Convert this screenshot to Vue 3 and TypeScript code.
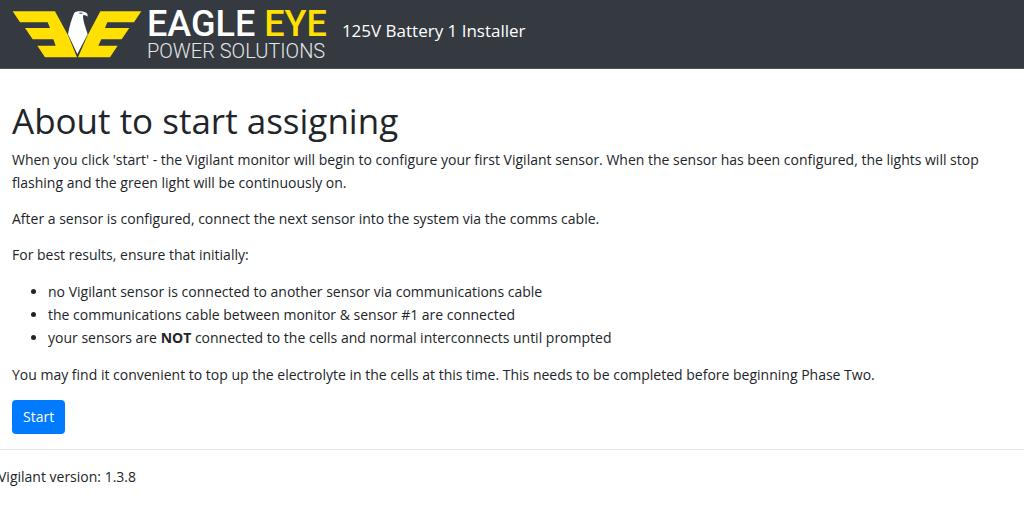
<script setup lang="ts">
import { ref } from 'vue'

const title = ref<string>('125V Battery 1 Installer')
const version = ref<string>('1.3.8')
</script>

<template>
  <div class="page">
    <header class="navbar">
      <a class="brand" href="#" aria-label="Eagle Eye Power Solutions">
        <svg class="emblem" viewBox="0 0 390 141" width="130" height="47" aria-hidden="true">
          <g fill="#ffe000">
            <path d="M2 1H129L168 73L195 139H99L76 104H131L124 85H62L39 51H114L107 34H24Z" />
            <path d="M388 1H265L227 73L198 139H294L317 104H259L268 85H329L352 51H279L286 34H366Z" />
          </g>
          <path
            fill="#fff"
            d="M187 5C193 0 206 0 215 2C225 4 229 9 226 17C222 13 219 12 213 13C212 22 216 32 218 42L227 70L196 129L168 70C172 46 179 22 187 5Z"
          />
          <path fill="#343a40" d="M202 5h9v3h-9z" />
        </svg>
        <span class="wordmark">
          <span class="name">EAGLE <span class="accent">EYE</span></span>
          <span class="tag">POWER SOLUTIONS</span>
        </span>
      </a>
      <span class="title">{{ title }}</span>
    </header>

    <main class="content">
      <h1>About to start assigning</h1>
      <p>
        When you click 'start' - the Vigilant monitor will begin to configure your first Vigilant
        sensor. When the sensor has been configured, the lights will stop flashing and the green
        light will be continuously on.
      </p>
      <p>After a sensor is configured, connect the next sensor into the system via the comms cable.</p>
      <p>For best results, ensure that initially:</p>
      <ul>
        <li>no Vigilant sensor is connected to another sensor via communications cable</li>
        <li>the communications cable between monitor &amp; sensor #1 are connected</li>
        <li>
          your sensors are <strong>NOT</strong> connected to the cells and normal interconnects
          until prompted
        </li>
      </ul>
      <p>
        You may find it convenient to top up the electrolyte in the cells at this time. This needs
        to be completed before beginning Phase Two.
      </p>
      <button type="button" class="start">Start</button>
    </main>

    <footer class="footer">Vigilant version: {{ version }}</footer>
  </div>
</template>

<style>
body {
  margin: 0;
  background: #fff;
}
</style>

<style scoped>
.page {
  font-family: 'Segoe UI', 'Open Sans', 'Noto Sans', sans-serif;
  font-size: 14px;
  line-height: 23px;
  color: #212529;
  overflow-x: hidden;
}

.navbar {
  display: flex;
  align-items: center;
  gap: 15px;
  padding: 6px 12px 8px;
  background: #343a40;
  border-bottom: 1px solid #50555a;
}

.brand {
  display: flex;
  align-items: center;
  gap: 5px;
  text-decoration: none;
}

.emblem {
  display: block;
  margin-top: 3px;
}

.wordmark {
  display: flex;
  flex-direction: column;
  font-family: Roboto, sans-serif;
  white-space: nowrap;
}

.name {
  font-size: 36px;
  font-weight: 500;
  line-height: 36px;
  color: #fff;
}

.accent {
  color: #ffe000;
}

.tag {
  font-size: 20px;
  font-weight: 300;
  line-height: 18px;
  color: #e6e7e8;
}

.title {
  padding-bottom: 4px;
  font-size: 17px;
  line-height: 28px;
  color: #fff;
}

.content {
  padding: 29px 12px 15px;
}

h1 {
  margin: 0 0 5px;
  font-size: 35px;
  font-weight: 400;
  line-height: 45px;
}

p {
  margin: 0 0 13px;
}

ul {
  margin: 0 0 14px;
  padding: 1px 0 0 36px;
}

.start {
  display: block;
  margin-top: 14px;
  padding: 6px 11px;
  border: 0;
  border-radius: 4px;
  background: #007bff;
  color: #fff;
  font: inherit;
  line-height: 22px;
}

.footer {
  margin-left: -2px;
  padding: 15px 0;
  border-top: 1px solid #e5e5e5;
}
</style>
